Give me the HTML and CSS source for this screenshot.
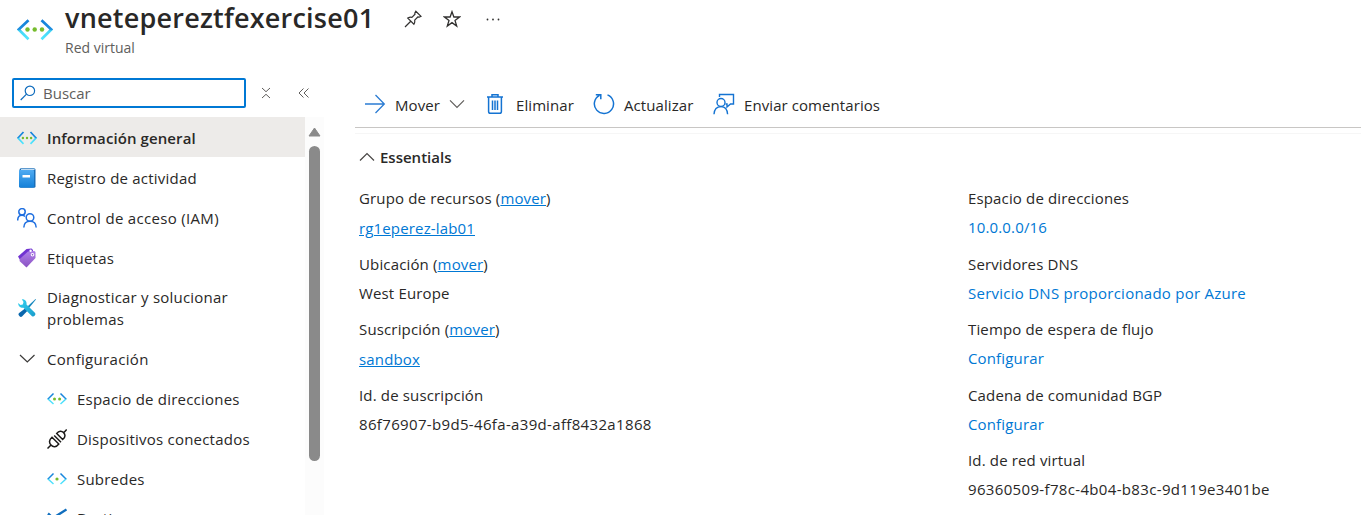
FILE: index.html
```html
<!DOCTYPE html>
<html lang="es">
<head>
<meta charset="utf-8">
<title>vnetepereztfexercise01</title>
<link rel="stylesheet" href="styles.css">
</head>
<body>
<svg width="0" height="0" class="defs">
  <defs>
    <linearGradient id="angle" x1="0" y1="0" x2="0" y2="1"><stop offset="0" stop-color="#1380da"/><stop offset=".48" stop-color="#1f8fe0"/><stop offset=".56" stop-color="#45d5f5"/><stop offset="1" stop-color="#50e6ff"/></linearGradient>
    <linearGradient id="book" x1="0" y1="0" x2="0" y2="1"><stop offset="0" stop-color="#4fabf2"/><stop offset="1" stop-color="#1480d8"/></linearGradient>
    <linearGradient id="tag" x1="0" y1="0" x2="0" y2="1"><stop offset="0" stop-color="#b080ea"/><stop offset="1" stop-color="#8a52c2"/></linearGradient>
    <linearGradient id="wrench" x1="0" y1="0" x2="1" y2="1"><stop offset="0" stop-color="#35d3f0"/><stop offset="1" stop-color="#1a9ccc"/></linearGradient>
  </defs>
</svg>
<header class="header">
  <svg class="resource-icon" width="36" height="22" viewBox="0 0 36 22" fill="none">
    <path d="M11.500 1.200 1.700 10.500 11.500 20.200M24.500 1.200 34.300 10.500 24.500 20.200" stroke="url(#angle)" stroke-width="2.700"/>
    <g fill="#76bc2d"><circle cx="10.500" cy="10.500" r="2.200"/><circle cx="17.700" cy="10.500" r="2.200"/><circle cx="25" cy="10.500" r="2.200"/></g>
  </svg>
  <div class="heading">
    <div class="title-row">
      <h1 class="title">vnetepereztfexercise01</h1>
      <div class="title-actions">
        <svg width="18" height="18" viewBox="0 0 18 18" fill="none" stroke="#323130" stroke-width="1.200"><path d="M11.800 1.200 17 6.300 15.200 7.200 13.800 7 10.700 10.200C11 12 10.600 13 9.900 14.200L3.800 8.100C5 7.400 6.200 7 7.900 7.300L11 4.200 10.800 3ZM6.500 11.500 1 17"/></svg>
        <svg class="star" width="18" height="18" viewBox="0 0 18 18" fill="none" stroke="#323130" stroke-width="1.300"><path d="M9 1.700 10.900 7H16.500L12 10.400 13.700 16 9 12.600 4.300 16 6 10.400 1.500 7H7.100Z"/></svg>
        <svg width="18" height="18" viewBox="0 0 18 18" fill="#323130"><circle cx="3.500" cy="9.500" r=".9"/><circle cx="9" cy="9.500" r=".9"/><circle cx="14.500" cy="9.500" r=".9"/></svg>
      </div>
    </div>
    <div class="subtitle">Red virtual</div>
  </div>
</header>
<div class="layout">
  <aside class="sidebar">
    <div class="search-row">
      <div class="search">
        <svg width="16" height="16" viewBox="0 0 16 16" fill="none" stroke="#0f6cbd" stroke-width="1.200"><circle cx="9.900" cy="5.800" r="4.700"/><path d="M6.500 9.200.7 15"/></svg>
        <span class="placeholder">Buscar</span>
      </div>
      <svg class="expand" width="10" height="12" viewBox="0 0 10 12" fill="none" stroke="#605e5c"><path d="M1 1 5 4.700 9 1M1 11 5 7.300 9 11"/></svg>
      <svg class="collapse" width="12" height="10" viewBox="0 0 12 10" fill="none" stroke="#605e5c"><path d="M5.500.5 1 5 5.500 9.500M10.500.5 6 5 10.500 9.500"/></svg>
    </div>
    <div class="menu-area">
      <nav class="menu">
        <div class="item selected">
          <svg width="20" height="20" viewBox="0 0 20 20" fill="none"><path d="M6.500 4 1 10 6.500 15.800M13.500 4 19 10 13.500 15.800" stroke="url(#angle)" stroke-width="1.700"/><g fill="#76bc2d"><circle cx="5.900" cy="10" r="1.200"/><circle cx="10" cy="10" r="1.200"/><circle cx="14.100" cy="10" r="1.200"/></g></svg>
          <span>Información general</span>
        </div>
        <div class="item">
          <svg width="20" height="20" viewBox="0 0 20 20"><rect x="2.500" y=".2" width="16" height="19.500" rx="1.500" fill="#1b6fb8"/><path d="M4 .9h13.500v1H4z" fill="#d5eafb"/><rect x="2" y="2" width="15" height="17.500" rx="1" fill="url(#book)"/><path d="M5.500 7h7.500v2.500H5.500z" fill="#fff"/></svg>
          <span>Registro de actividad</span>
        </div>
        <div class="item">
          <svg width="20" height="20" viewBox="0 0 20 20" fill="none" stroke="#1f6fe0" stroke-width="1.500"><circle cx="5" cy="3.800" r="3.200"/><path d="M.7 12.500C.7 9 2.500 7.300 5 7.300c1.400 0 2.200.4 3 1.200"/><circle cx="13" cy="9.500" r="3.800"/><path d="M6.800 19.500c.2-4 2.500-6.200 6.200-6.200s6 2.200 6.200 6.200"/></svg>
          <span class="wide">Control de acceso (IAM)</span>
        </div>
        <div class="item">
          <svg width="20" height="20" viewBox="0 0 20 20"><path d="M1 8.500 9.500 1 14.500.5 16 2 15.500 6 3 12Z" fill="#7133d1"/><path d="M3 10.800 11 3.400l6.300-.5L18.500 4v6L9.500 19.500 2.500 13z" fill="url(#tag)"/><circle cx="13.600" cy="2.800" r="1.200" fill="#fff"/><circle cx="15.500" cy="6.700" r="1.800" fill="#fff"/><circle cx="15.500" cy="6.700" r=".8" fill="#8050c0"/></svg>
          <span>Etiquetas</span>
        </div>
        <div class="item two-line">
          <svg width="20" height="20" viewBox="0 0 20 20"><path d="M18.500 1 19 1.500 11.800 10.200 10.200 8.700Z" fill="#1788be"/><path d="M8 10.500 10.500 12.800 5 18.500Q3.800 19.500 2.300 18T1.800 15.200Z" fill="#0a67ad"/><path d="M4.800 1.200C7.500.8 10.200 3 9.500 6.500L18.100 15Q19 16.200 17.800 17.600T15 18.300L6.500 9.800C3.500 10.300 1 8 1.200 5L3.500 6.900 5.800 6.400 6.500 4Z" fill="url(#wrench)"/></svg>
          <span>Diagnosticar y solucionar<br>problemas</span>
        </div>
        <div class="item">
          <svg width="20" height="20" viewBox="0 0 20 20" fill="none" stroke="#3b3a39" stroke-width="1.200"><path d="M3 6 10.300 13 17.500 6"/></svg>
          <span class="wide">Configuración</span>
        </div>
        <div class="item sub">
          <svg width="20" height="20" viewBox="0 0 20 20" fill="none"><path d="M6.500 4.500 1 10 6.500 15M13.500 4.500 19 10 13.500 15" stroke="url(#angle)" stroke-width="1.500"/><g fill="#76bc2d"><circle cx="7.500" cy="10" r="1.500"/><circle cx="12.600" cy="10" r="1.500"/></g></svg>
          <span>Espacio de direcciones</span>
        </div>
        <div class="item sub">
          <svg width="20" height="20" viewBox="0 0 20 20" fill="none" stroke="#1b1a19" stroke-width="1.500"><path d="M.5 19.500 4 16M16.500 4 19.700.5M7.200 6.500 14 13.300M9.700 4.500 15.700 10.500C19 8 18.200 5.500 16.500 3.600S12 1.500 9.700 4.500ZM5 8.200 11.800 15C9.200 18.500 6 18.200 4 16S1.800 11 5 8.200Z"/></svg>
          <span>Dispositivos conectados</span>
        </div>
        <div class="item sub">
          <svg width="20" height="20" viewBox="0 0 20 20" fill="none"><path d="M6.500 4.500 1 10 6.500 15M13.500 4.500 19 10 13.500 15" stroke="url(#angle)" stroke-width="1.500"/><circle cx="10" cy="10" r="1.600" fill="#76bc2d"/></svg>
          <span>Subredes</span>
        </div>
        <div class="item sub last">
          <svg width="20" height="20" viewBox="0 0 20 20" fill="none"><path d="M1 5.500 6 10 19.500 1.500" stroke="#106ebe" stroke-width="2.400"/></svg>
          <span>Bastion</span>
        </div>
      </nav>
      <div class="scrollbar">
        <svg width="13" height="10" viewBox="0 0 13 10"><path d="M6.500 1 12 9H1Z" fill="#8a8a8a" stroke="#8a8a8a" stroke-linejoin="round"/></svg>
        <div class="thumb"></div>
      </div>
    </div>
  </aside>
  <main class="main">
    <div class="toolbar">
      <div class="command move">
        <svg width="22" height="20" viewBox="0 0 22 20" fill="none" stroke="#2b7cd3" stroke-width="1.300"><path d="M1 10H20M11.500 1 20.300 10 11.500 19"/></svg>
        <span>Mover</span>
        <svg class="chevron" width="16" height="10" viewBox="0 0 16 10" fill="none" stroke="#605e5c" stroke-width="1.200"><path d="M1 1.300 8 8.300 15 1.300"/></svg>
      </div>
      <div class="command delete">
        <svg width="18" height="22" viewBox="0 0 18 22" fill="none" stroke="#1473d2" stroke-width="1.500"><path d="M1 4H17M6 4V1.700H12V4M2.600 4V18.500Q2.600 20.300 4.300 20.300H13.700Q15.400 20.300 15.400 18.500V4M6.500 7.500V17M9 7.500V17M11.500 7.500V17"/></svg>
        <span>Eliminar</span>
      </div>
      <div class="command refresh">
        <svg width="22" height="22" viewBox="0 0 22 22" fill="none" stroke="#1473d2" stroke-width="1.500"><path d="M14.500 1.900A9.600 9.600 0 1 1 6.500 2.300M2.800 1.700H7.800V6.300"/></svg>
        <span>Actualizar</span>
      </div>
      <div class="command feedback">
        <svg width="22" height="22" viewBox="0 0 22 22" fill="none" stroke="#1473d2" stroke-width="1.400"><path d="M6.500 4V1.500H20.500V11H17.500L14 14V11H12.500"/><circle cx="8" cy="9.500" r="4"/><path d="M1 21.200C1.300 16.500 4 13.600 8 13.600S14.300 16.500 14.600 21.200"/></svg>
        <span>Enviar comentarios</span>
      </div>
    </div>
    <section class="essentials">
      <div class="essentials-title">
        <svg width="16" height="10" viewBox="0 0 16 10" fill="none" stroke="#484644" stroke-width="1.200"><path d="M1 8.500 8 1.500 15 8.500"/></svg>
        <span>Essentials</span>
      </div>
      <div class="columns">
        <dl class="fields">
          <div class="field"><dt>Grupo de recursos (<a>mover</a>)</dt><dd class="lower"><a>rg1eperez-lab01</a></dd></div>
          <div class="field"><dt>Ubicación (<a>mover</a>)</dt><dd>West Europe</dd></div>
          <div class="field"><dt>Suscripción (<a>mover</a>)</dt><dd class="lower"><a>sandbox</a></dd></div>
          <div class="field"><dt>Id. de suscripción</dt><dd class="id">86f76907-b9d5-46fa-a39d-aff8432a1868</dd></div>
        </dl>
        <dl class="fields">
          <div class="field"><dt>Espacio de direcciones</dt><dd class="link">10.0.0.0/16</dd></div>
          <div class="field"><dt>Servidores DNS</dt><dd class="link long">Servicio DNS proporcionado por Azure</dd></div>
          <div class="field"><dt>Tiempo de espera de flujo</dt><dd class="link">Configurar</dd></div>
          <div class="field"><dt>Cadena de comunidad BGP</dt><dd class="link">Configurar</dd></div>
          <div class="field"><dt>Id. de red virtual</dt><dd class="id">96360509-f78c-4b04-b83c-9d119e3401be</dd></div>
        </dl>
      </div>
    </section>
  </main>
</div>
</body>
</html>
```
FILE: styles.css
```css
* { box-sizing: border-box; }
html, body { height: 515px; overflow: hidden; }
body {
  margin: 0;
  background: #fff;
  color: #292827;
  font: 15px/22px "Open Sans", "Noto Sans", sans-serif;
  display: flex;
  flex-direction: column;
}
svg { display: block; flex: none; }
.defs { height: 0; }
h1, dl, dd { margin: 0; }

.header { display: flex; height: 70px; padding-left: 17px; flex: none; }
.resource-icon { margin-top: 19px; }
.heading { margin-left: 12px; }
.title-row { display: flex; height: 38px; }
.title { font-size: 27px; line-height: 36px; font-weight: 600; letter-spacing: .22px; white-space: nowrap; width: 309px; }
.title-actions { display: flex; gap: 22px; padding: 10px 0 0 30px; }
.star { margin-left: -1px; margin-right: 1px; }
.subtitle { font-size: 14px; line-height: 20px; color: #605e5c; }

.layout { display: flex; height: 445px; }
.sidebar { width: 324px; flex: none; }
.search-row { display: flex; align-items: center; height: 47px; padding: 0 0 1px 12px; }
.search {
  display: flex; align-items: center; gap: 7px;
  width: 234px; height: 30px; padding-left: 6px;
  border: 2px solid #0078d4; border-radius: 2px;
}
.placeholder { color: #605e5c; }
.expand { margin-left: 15px; }
.collapse { margin-left: 27px; }
.menu-area { display: flex; height: 398px; }
.menu { width: 305px; overflow: hidden; letter-spacing: .22px; }
.item { display: flex; align-items: center; gap: 10px; height: 40px; padding: 2px 0 0 17px; white-space: nowrap; }
.item svg { margin-top: -1px; }
.item .wide { letter-spacing: .32px; }
.item.selected { background: #edebe9; font-weight: 600; letter-spacing: .1px; }
.item.two-line { height: 61px; padding-top: 0; }
.item.two-line svg { margin-top: 0; }
.item.sub { padding-left: 47px; }
.item.sub.last { padding-top: 0; }
.scrollbar { display: flex; flex-direction: column; align-items: center; width: 19px; background: #fcfcfc; padding-top: 10px; }
.thumb { width: 11px; height: 315px; margin-top: 9px; border-radius: 6px; background: #8a8a8a; }

.main { flex: 1; margin-left: 31px; }
.toolbar { display: flex; align-items: center; height: 58px; padding: 12px 0 0 9px; border-bottom: 1px solid #c8c6c4; }
.command { display: flex; align-items: center; gap: 9px; height: 22px; white-space: nowrap; letter-spacing: .08px; }
.command > svg { margin-top: -2px; }
.move { width: 122px; }
.delete { width: 107px; gap: 12px; }
.refresh { width: 120px; }
.essentials { border-top: 1px solid #f6f6f6; margin-top: 5px; padding: 12px 0 0 4px; }
.essentials-title { display: flex; align-items: center; gap: 5px; font-weight: 600; }
.columns { display: grid; grid-template-columns: 609px 1fr; padding-top: 19px; letter-spacing: .15px; }
.field { height: 65.6px; white-space: nowrap; }
.field dd { margin-top: 7px; }
.field dd.lower { margin-top: 8px; }
.field .id { letter-spacing: .34px; }
.field .long { letter-spacing: .25px; }
.field a { color: #0078d4; text-decoration: underline; }
.link { color: #0078d4; }
```
